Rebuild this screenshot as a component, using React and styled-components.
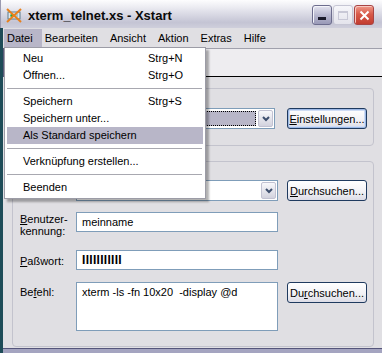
import React from "react";
import styled, { createGlobalStyle, css } from "styled-components";

const GlobalStyle = createGlobalStyle`
  html, body {
    margin: 0;
    padding: 0;
    overflow: hidden;
    background: #e0dfe3;
  }
  body {
    font-family: "Liberation Sans", Arial, sans-serif;
    font-size: 11px;
    color: #000;
  }
`;

const menuItems = [
  { label: "Neu", key: "Strg+N" },
  { label: "Öffnen...", key: "Strg+O" },
  { sep: true },
  { label: "Speichern", key: "Strg+S" },
  { label: "Speichern unter..." },
  { label: "Als Standard speichern", active: true },
  { sep: true },
  { label: "Verknüpfung erstellen..." },
  { sep: true },
  { label: "Beenden" },
];

const topMenu = ["Datei", "Bearbeiten", "Ansicht", "Aktion", "Extras", "Hilfe"];

const AppIcon = () => (
  <svg width="16" height="16" viewBox="0 0 16 16">
    <rect x="2" y="5" width="12" height="7" fill="#dfe6ec" stroke="#5d7c8c" />
    <rect x="4" y="7" width="8" height="3" fill="#9fc9d6" />
    <circle cx="6" cy="8.5" r="1.6" fill="#2aa838" />
    <line x1="1" y1="2" x2="15" y2="15" stroke="#e8801c" strokeWidth="2" />
    <line x1="15" y1="2" x2="1" y2="15" stroke="#e8801c" strokeWidth="2" />
  </svg>
);

const Chevron = () => (
  <svg width="8" height="6" viewBox="0 0 8 6">
    <polyline points="1,1 4,4 7,1" fill="none" stroke="#3e4f6e" strokeWidth="2" />
  </svg>
);

const App = () => {
  return (
    <>
      <GlobalStyle />
      <Window>
        <TitleBar>
          <AppIcon />
          <Title>xterm_telnet.xs - Xstart</Title>
          <Caption>
            <CapButton kind="min">
              <MinBar />
            </CapButton>
            <CapButton kind="max">
              <MaxBox />
            </CapButton>
            <CapButton kind="close">
              <svg width="11" height="11" viewBox="0 0 11 11">
                <path d="M1.5 1.5 L9.5 9.5 M9.5 1.5 L1.5 9.5" stroke="#fff" strokeWidth="2" />
              </svg>
            </CapButton>
          </Caption>
        </TitleBar>
        <Frame>
          <MenuBar>
            {topMenu.map((m, i) => (
              <MenuBarItem key={m} active={i === 0}>
                {m}
              </MenuBarItem>
            ))}
          </MenuBar>
          <TabStrip />
          <Content>
            <GroupBox pad="19px 6px 16px 7px">
              <FieldRow>
                <span />
                <Combo width={199}>
                  <ComboField>
                    <Selected />
                  </ComboField>
                  <ComboArrow>
                    <Chevron />
                  </ComboArrow>
                </Combo>
                <Button focused>
                  <u>E</u>instellungen...
                </Button>
              </FieldRow>
            </GroupBox>
            <GroupBox pad="18px 6px 15px 7px" gapTop={15}>
              <FieldRow>
                <span />
                <Combo>
                  <ComboField />
                  <ComboArrow>
                    <Chevron />
                  </ComboArrow>
                </Combo>
                <Button>
                  <u>D</u>urchsuchen...
                </Button>
              </FieldRow>
              <FieldRow top={11}>
                <Label>
                  <u>B</u>enutzer-
                  <br />
                  kennung:
                </Label>
                <Input>meinname</Input>
              </FieldRow>
              <FieldRow top={13}>
                <Label>
                  <u>P</u>aßwort:
                </Label>
                <Input>
                  <Dots>IIIIIIIIIII</Dots>
                </Input>
              </FieldRow>
              <FieldRow top={12}>
                <Label top>
                  Be<u>f</u>ehl:
                </Label>
                <TextArea>xterm -ls -fn 10x20  -display @d</TextArea>
                <Button>
                  Du<u>r</u>chsuchen...
                </Button>
              </FieldRow>
            </GroupBox>
          </Content>
          <BottomEdge />
        </Frame>

        <DropMenu>
          {menuItems.map((it, i) =>
            it.sep ? (
              <Separator key={i} />
            ) : (
              <DropItem key={i} active={it.active}>
                <span>{it.label}</span>
                <span>{it.key || ""}</span>
              </DropItem>
            )
          )}
        </DropMenu>
      </Window>
    </>
  );
};

export default App;

const Window = styled.div`
  position: relative;
  width: 382px;
  height: 353px;
  display: flex;
  flex-direction: column;
  overflow: hidden;
`;

const TitleBar = styled.div`
  height: 28px;
  box-sizing: border-box;
  display: flex;
  align-items: center;
  gap: 6px;
  padding: 2px 8px 0 5px;
  border-left: 1px solid #9a9ab0;
  background: linear-gradient(
    #fdfdfe 0%,
    #ececf2 25%,
    #d6d6e2 55%,
    #c4c4d4 80%,
    #cfcfdc 100%
  );
`;

const Title = styled.div`
  font-family: "Liberation Sans", Arial, sans-serif;
  font-weight: bold;
  font-size: 13px;
  color: #0a0a0a;
  white-space: nowrap;
`;

const Caption = styled.div`
  margin-left: auto;
  display: flex;
  gap: 1px;
`;

const CapButton = styled.div`
  width: 20px;
  height: 20px;
  box-sizing: border-box;
  border-radius: 3px;
  display: flex;
  align-items: center;
  justify-content: center;
  position: relative;
  ${(p) =>
    p.kind === "min" &&
    css`
      border: 1px solid #6d6d8e;
      background: linear-gradient(#e4e4f0, #b4b4cc 55%, #9a9ab8);
      box-shadow: inset 1px 1px 0 #f4f4fa;
    `}
  ${(p) =>
    p.kind === "max" &&
    css`
      border: 1px solid #c6c6d4;
      background: linear-gradient(#f6f6fa, #e4e4ec);
    `}
  ${(p) =>
    p.kind === "close" &&
    css`
      border: 1px solid #a84444;
      background: linear-gradient(#f09a8a, #d85a4a 45%, #c23c30);
      box-shadow: inset 1px 1px 0 #f8c8c0;
    `}
`;

const MinBar = styled.div`
  position: absolute;
  left: 5px;
  bottom: 4px;
  width: 8px;
  height: 3px;
  background: #1a1a2a;
`;

const MaxBox = styled.div`
  width: 10px;
  height: 9px;
  box-sizing: border-box;
  border: 1px solid #c8c8d6;
  border-top-width: 2px;
`;

const Frame = styled.div`
  flex: 1;
  display: flex;
  flex-direction: column;
  border-left: 3px solid #1e4c58;
  box-shadow: inset 1px 0 0 #5a5a78;
`;

const MenuBar = styled.div`
  height: 20px;
  box-sizing: border-box;
  display: flex;
  padding-left: 1px;
  background: #e0dfe3;
`;

const MenuBarItem = styled.div`
  margin: 1px 0;
  padding: 0 9px 0 3px;
  line-height: 18px;
  background: ${(p) => (p.active ? "#b8b6c8" : "transparent")};
`;

const TabStrip = styled.div`
  height: 29px;
  box-sizing: border-box;
  border-top: 1px solid #a0a0ac;
  border-bottom: 1px solid #000;
  margin-left: 1px;
  background: #eeedf0;
`;

const Content = styled.div`
  height: 271px;
  box-sizing: border-box;
  padding: 11px 8px 0 9px;
  background: #e0dfe3;
`;

const GroupBox = styled.div`
  margin-top: ${(p) => p.gapTop || 0}px;
  border: 1px solid #c3c3cd;
  border-radius: 4px;
  padding: ${(p) => p.pad};
  display: flex;
  flex-direction: column;
`;

const FieldRow = styled.div`
  margin-top: ${(p) => p.top || 0}px;
  display: grid;
  grid-template-columns: 47px 202px 80px;
  column-gap: 9px;
  align-items: start;
`;

const Label = styled.div`
  align-self: ${(p) => (p.top ? "start" : "center")};
  padding-top: ${(p) => (p.top ? "4px" : "1px")};
  line-height: 12px;
  white-space: nowrap;
`;

const fieldBorder = css`
  border: 1px solid #7f9db9;
  background: #fff;
  box-sizing: border-box;
`;

const Combo = styled.div`
  ${fieldBorder};
  width: ${(p) => p.width || 202}px;
  height: 21px;
  display: flex;
  padding: 1px;
`;

const ComboField = styled.div`
  flex: 1;
  display: flex;
  padding: 1px 2px 1px 1px;
`;

const Selected = styled.div`
  flex: 1;
  background: #b8b6c8;
  outline: 1px dotted #000;
  outline-offset: -1px;
`;

const ComboArrow = styled.div`
  width: 15px;
  box-sizing: border-box;
  border: 1px solid #c2c2d2;
  border-radius: 2px;
  background: linear-gradient(#f8f8fb, #e2e2ea 60%, #d2d2de);
  display: flex;
  align-items: center;
  justify-content: center;
`;

const Input = styled.div`
  ${fieldBorder};
  height: 20px;
  padding-left: 5px;
  line-height: 18px;
  white-space: nowrap;
`;

const Dots = styled.span`
  font-weight: bold;
  font-size: 12px;
  letter-spacing: 0.3px;
`;

const TextArea = styled.div`
  ${fieldBorder};
  height: 49px;
  padding: 3px 5px;
  line-height: 13px;
  white-space: pre;
`;

const Button = styled.div`
  height: 21px;
  box-sizing: border-box;
  border: 1px solid #1f3a5f;
  border-radius: 3px;
  background: linear-gradient(#ffffff, #f2f2f6 55%, #dcdce6);
  display: flex;
  align-items: center;
  justify-content: center;
  white-space: nowrap;
  ${(p) =>
    p.focused &&
    css`
      box-shadow: inset 0 0 0 1px #9cb8e6, inset 0 0 0 2px #cfdcf4;
    `}
`;

const BottomEdge = styled.div`
  height: 5px;
  border-top: 1px solid #55557a;
  box-sizing: border-box;
  background: #a4a4c0;
`;

const DropMenu = styled.div`
  position: absolute;
  left: 4px;
  top: 47px;
  width: 202px;
  box-sizing: border-box;
  padding: 2px;
  background: #fff;
  border: 1px solid #9c9ca6;
  box-shadow: 3px 3px 2px rgba(0, 0, 0, 0.3);
`;

const DropItem = styled.div`
  height: 17px;
  line-height: 17px;
  display: grid;
  grid-template-columns: 125px auto;
  padding-left: 16px;
  white-space: nowrap;
  background: ${(p) => (p.active ? "#b8b6c8" : "transparent")};
`;

const Separator = styled.div`
  height: 9px;
  display: flex;
  align-items: center;
  &::before {
    content: "";
    flex: 1;
    margin-right: 1px;
    border-top: 1px solid #a8a8b0;
  }
`;
